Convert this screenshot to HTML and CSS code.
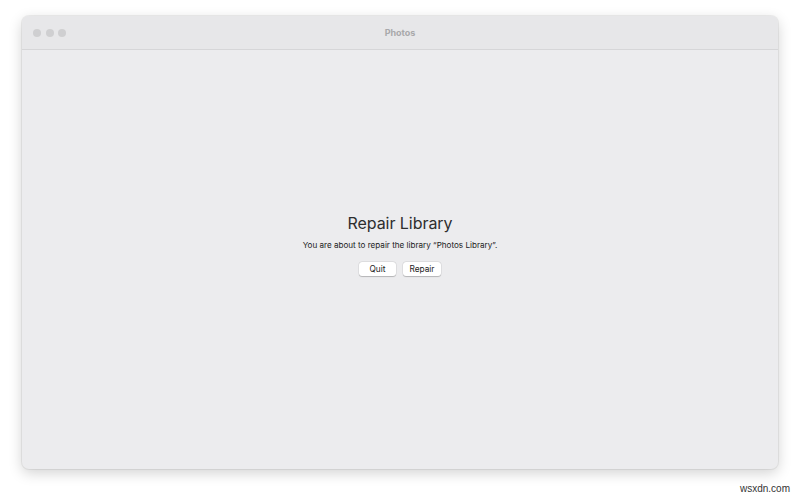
FILE: index.html
```html
<!DOCTYPE html>
<html>
<head>
<meta charset="utf-8">
<link rel="stylesheet" href="styles.css">
</head>
<body>
<div class="page">
  <div class="window">
    <div class="titlebar">
      <div class="lights">
        <span class="light"></span>
        <span class="light"></span>
        <span class="light"></span>
      </div>
      <div class="title">Photos</div>
    </div>
    <div class="content">
      <h1 class="heading">Repair Library</h1>
      <p class="message">You are about to repair the library “Photos Library”.</p>
      <div class="buttons">
        <button class="btn btn-quit">Quit</button>
        <button class="btn btn-repair">Repair</button>
      </div>
    </div>
  </div>
  <div class="watermark">wsxdn.com</div>
</div>
</body>
</html>
```

FILE: styles.css
```css
html, body {
  margin: 0;
  padding: 0;
  background: #ffffff;
}
body {
  font-family: "Inter", "Liberation Sans", Arial, sans-serif;
  width: 800px;
  height: 496px;
  overflow: hidden;
}
.page {
  position: relative;
  width: 800px;
  height: 496px;
  padding: 16px 22px 0 22px;
  box-sizing: border-box;
}
.window {
  width: 756px;
  height: 453px;
  background: #ececee;
  border-radius: 7px;
  box-shadow: 0 4px 14px rgba(0,0,0,0.18), 0 0 0 1px rgba(0,0,0,0.06);
  display: flex;
  flex-direction: column;
  overflow: hidden;
}
.titlebar {
  height: 33px;
  flex: 0 0 33px;
  background: #e7e7e9;
  border-bottom: 1px solid #d6d6d8;
  display: flex;
  align-items: center;
  position: relative;
}
.lights {
  display: flex;
  gap: 4.5px;
  padding-left: 11px;
}
.light {
  width: 8px;
  height: 8px;
  border-radius: 50%;
  background: #cfcfd1;
}
.title {
  position: absolute;
  left: 0;
  right: 0;
  top: 0;
  bottom: 0;
  display: flex;
  align-items: center;
  justify-content: center;
  font-size: 9px;
  font-weight: 700;
  color: #a9a9ab;
}
.content {
  flex: 1;
  display: flex;
  flex-direction: column;
  align-items: center;
  padding-top: 162px;
}
.heading {
  margin: 0;
  font-size: 16px;
  font-weight: 400;
  color: #2e2e2e;
  line-height: 22px;
  letter-spacing: -0.05px;
}
.message {
  margin: 5px 0 0 0;
  font-size: 8.1px;
  color: #222;
  line-height: 12px;
}
.buttons {
  display: flex;
  gap: 7px;
  margin-top: 11px;
}
.btn {
  font-family: inherit;
  font-size: 8.3px;
  color: #222;
  background: #ffffff;
  border: none;
  border-radius: 3px;
  height: 14px;
  padding: 0;
  box-shadow: 0 0.5px 1px rgba(0,0,0,0.2), 0 0 0 0.5px rgba(0,0,0,0.08);
  line-height: 14px;
}
.btn-quit { width: 37px; }
.btn-repair { width: 38px; }
.watermark {
  position: absolute;
  right: 10px;
  bottom: 2px;
  font-size: 10px;
  color: #333;
  font-family: "Liberation Sans", Arial, sans-serif;
}
```
